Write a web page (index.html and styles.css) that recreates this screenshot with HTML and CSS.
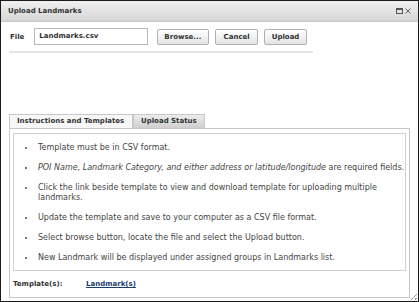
FILE: index.html
```html
<!DOCTYPE html>
<html lang="en">
<head>
    <meta charset="UTF-8">
    <title>Upload Landmarks</title>
    <link rel="stylesheet" href="styles.css">
</head>
<body>
    <div id="dialog">
        <div class="titlebar">
            <span class="title">Upload Landmarks</span>
            <span class="title-icons">
                <svg width="16" height="8" viewBox="0 0 16 8">
                    <rect x="0.5" y="1.5" width="6" height="5" fill="none" stroke="#555" stroke-width="1"/>
                    <rect x="0.5" y="1.5" width="6" height="1.5" fill="#555"/>
                    <path d="M9.5 1.5 L14.5 6.5 M14.5 1.5 L9.5 6.5" stroke="#666" stroke-width="1"/>
                </svg>
            </span>
        </div>

        <div class="content">
            <div class="file-row">
                <span class="file-label">File</span>
                <div class="file-input">Landmarks.csv</div>
                <button class="btn browse">Browse...</button>
                <button class="btn cancel">Cancel</button>
                <button class="btn upload">Upload</button>
            </div>

            <div class="tabs">
                <div class="tab active">Instructions and Templates</div>
                <div class="tab">Upload Status</div>
            </div>

            <div class="tab-panel">
                <div class="instructions">
                    <ul>
                        <li>Template must be in CSV format.</li>
                        <li><em>POI Name, Landmark Category, and either address or latitude/longitude</em> are required fields.</li>
                        <li>Click the link beside template to view and download template for uploading multiple landmarks.</li>
                        <li>Update the template and save to your computer as a CSV file format.</li>
                        <li>Select browse button, locate the file and select the Upload button.</li>
                        <li>New Landmark will be displayed under assigned groups in Landmarks list.</li>
                    </ul>
                </div>
                <div class="templates">
                    <span class="templates-label">Template(s):</span>
                    <a class="templates-link">Landmark(s)</a>
                </div>
            </div>
        </div>
        <div class="grip"></div>
    </div>
</body>
</html>
```

FILE: styles.css
```css
body {
    margin: 0;
    padding: 0;
    background-color: #ffffff;
    font-family: 'DejaVu Sans', Verdana, sans-serif;
    color: #333333;
}

#dialog {
    width: 417px;
    height: 300px;
    border: 1px solid #1a1a1a;
    background-color: #ffffff;
    position: relative;
}

.titlebar {
    height: 20px;
    display: flex;
    align-items: center;
    justify-content: space-between;
    padding: 0 6px 0 7px;
    background: linear-gradient(#f0f0f0, #d6d6d6);
    border-bottom: 1px solid #c8c8c8;
}

.title {
    font-size: 7px;
    font-weight: bold;
    color: #333333;
}

.title-icons svg {
    display: block;
}

.content {
    padding: 6px 7px 0 8px;
}

.file-row {
    display: flex;
    align-items: center;
    width: 304px;
    padding-bottom: 6px;
    border-bottom: 2px solid #e6e6e6;
}

.file-label {
    font-size: 7px;
    font-weight: bold;
    width: 25px;
    padding-left: 1px;
}

.file-input {
    width: 110px;
    height: 15px;
    line-height: 15px;
    border: 1px solid #b8b8b8;
    padding-left: 4px;
    font-size: 7px;
    font-weight: bold;
    color: #333333;
    margin-right: 9px;
}

.btn {
    font-family: 'DejaVu Sans', Verdana, sans-serif;
    font-size: 7px;
    font-weight: bold;
    color: #333333;
    height: 16px;
    padding: 0;
    margin-right: 6px;
    border: 1px solid #b0b0b0;
    border-radius: 2px;
    background: linear-gradient(#ffffff, #e4e4e4);
}

.browse {
    width: 54px;
}

.cancel,
.upload {
    width: 44px;
}

.tabs {
    display: flex;
    margin-top: 61px;
}

.tab {
    font-size: 7px;
    font-weight: bold;
    white-space: nowrap;
    height: 13px;
    line-height: 13px;
    padding: 0 7px;
    border: 1px solid #c8c8c8;
    border-bottom: none;
    background: linear-gradient(#ececec, #cfcfcf);
}

.tab.active {
    width: 108px;
    background: #f7f7f7;
}

.tab-panel {
    width: 401px;
    height: 170px;
    border: 1px solid #c8c8c8;
    padding: 4px 3px 0 3px;
    box-sizing: border-box;
}

.instructions {
    border: 1px solid #d0d0d0;
    height: 138px;
    box-sizing: border-box;
}

.instructions ul {
    margin: 0;
    padding: 9px 0 0 22px;
    list-style: disc;
}

.instructions li {
    font-size: 8px;
    line-height: 10px;
    color: #444444;
    margin-bottom: 10px;
    padding-left: 2px;
}

.instructions li::marker {
    font-size: 6px;
}

.templates {
    display: flex;
    padding-top: 9px;
    font-size: 7px;
    font-weight: bold;
}

.templates-label {
    width: 73px;
}

.templates-link {
    color: #1a3c6e;
    text-decoration: underline;
}

.grip {
    position: absolute;
    right: 1px;
    bottom: 1px;
    width: 6px;
    height: 6px;
    background: linear-gradient(135deg, transparent 45%, #999 45%, #999 55%, transparent 55%, transparent 75%, #999 75%, #999 85%, transparent 85%);
}
```
